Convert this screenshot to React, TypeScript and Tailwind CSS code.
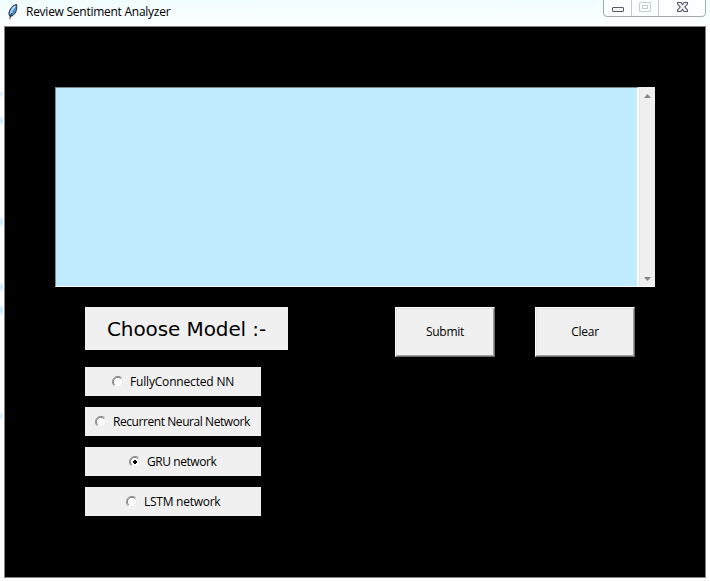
import React, { useState } from "react";

const MODELS = [
  { name: "FullyConnected NN", pad: "pl-[27px]", text: "tracking-[-0.18px]" },
  { name: "Recurrent Neural Network", pad: "pl-[10px]", text: "tracking-[-0.43px]" },
  { name: "GRU network", pad: "pl-[44px]", text: "tracking-[-0.44px]" },
  { name: "LSTM network", pad: "pl-[41px]", text: "tracking-[-0.26px]" },
];

function Feather() {
  return (
    <svg className="ml-[7px] mt-[4px] h-4 w-3 shrink-0" viewBox="0 0 12 16">
      <path d="M9.5 0.5C5.8 1.2 2.4 4.8 1.9 9.8L2.9 12.5L6 11.5C9 8.8 10.4 5.2 9.5 0.5Z" fill="#4f8fc4" stroke="#20273f" strokeWidth="1" />
      <path d="M8.2 2.2C5.8 4 4.2 6.8 3.6 9.8" fill="none" stroke="#a9d8f3" strokeWidth="1.7" />
      <path d="M4.6 9L2.7 15.3" fill="none" stroke="#20273f" strokeWidth="0.9" />
    </svg>
  );
}

function WindowControls() {
  return (
    <svg className="ml-auto mr-[4px] h-[17px] w-[103px]" viewBox="0 0 103 17" fill="none">
      <path d="M0.5 0V13Q0.5 16.5 4 16.5H99Q102.5 16.5 102.5 13V0" fill="#fbffff" stroke="#a2aaaa" />
      <path d="M28.5 0V16M55.5 0V16" stroke="#c3cbcb" />
      <rect x="9.5" y="7.5" width="11" height="4" rx="0.5" fill="#f4f4f4" stroke="#555a68" />
      <rect x="36.5" y="2.5" width="11" height="9" rx="0.5" stroke="#c5cdca" />
      <rect x="39.5" y="5.5" width="5" height="3" stroke="#c5cdca" />
      <path d="M74.5 2.5H78L79.5 4.5L81 2.5H84.5V4L81.8 7L84.5 10V11.5H81L79.5 9.5L78 11.5H74.5V10L77.2 7L74.5 4Z" fill="#f0f0f0" stroke="#555a68" strokeWidth="1.1" />
    </svg>
  );
}

function Radio({ checked }: { checked: boolean }) {
  return (
    <svg className="h-3 w-3 shrink-0" viewBox="0 0 12 12">
      <circle cx="6" cy="6" r="5.6" fill="white" />
      <path d="M2 9.7A5.3 5.3 0 0 1 9.8 2" fill="none" stroke="#8d8d8d" strokeWidth="1" />
      <path d="M2.7 8.8A4.3 4.3 0 0 1 8.9 2.7" fill="none" stroke="#555" strokeWidth="0.8" />
      <path d="M9.4 2.8A4.6 4.6 0 0 1 2.8 9.4" fill="none" stroke="#dcdcdc" strokeWidth="0.8" />
      {checked && <path d="M5 4H7V5H8V7H7V8H5V7H4V5H5Z" fill="black" />}
    </svg>
  );
}

function PushButton({ children, onClick }: { children: React.ReactNode; onClick?: () => void }) {
  return (
    <button onClick={onClick} className="h-[50px] w-[100px] border border-t-white border-l-white border-r-[#696969] border-b-[#696969] bg-[#f0f0f0]">
      <span className="flex h-full w-full items-center justify-center border border-t-[#e3e3e3] border-l-[#e3e3e3] border-r-[#a0a0a0] border-b-[#a0a0a0] tracking-[-0.26px]">
        {children}
      </span>
    </button>
  );
}

export default function App() {
  const [model, setModel] = useState("GRU network");
  const [review, setReview] = useState("");
  return (
    <div className="flex h-[581px] w-[710px] flex-col overflow-hidden bg-[linear-gradient(180deg,transparent_90px,#d5effc_94px,transparent_98px,transparent_116px,#c4e8fc_121px,transparent_126px,transparent_216px,#c4e8fc_222px,transparent_228px,transparent_282px,#c4e8fc_287px,transparent_292px,transparent_304px,#c4e8fc_310px,transparent_317px,transparent_410px,#d5effc_416px,transparent_422px)] bg-[length:3px_581px] bg-no-repeat font-['Open_Sans','Noto_Sans',sans-serif] text-[12px] leading-4 text-black">
      <header className="flex h-[26px] shrink-0 bg-gradient-to-b from-[#f0fdff] to-[#fdffff]">
        <Feather />
        <h1 className="ml-[7px] mt-[4px] whitespace-nowrap tracking-[-0.26px]">Review Sentiment Analyzer</h1>
        <WindowControls />
      </header>
      <main className="ml-[4px] h-[552px] w-[702px] shrink-0 border border-[#858585] bg-black pl-[50px] pt-[60px]">
        <div className="flex h-[200px] w-[600px] bg-[#f0f0f0]">
          <div className="w-[584px] border-t border-l border-t-[#788b94] border-l-[#788b94] border-r-2 border-b border-r-white border-b-white bg-[#c0edfe]">
            <textarea value={review} onChange={(e) => setReview(e.target.value)} className="block h-full w-full resize-none bg-transparent p-1 outline-none" />
          </div>
          <div className="flex w-4 flex-col items-center justify-between border-b border-l border-b-white border-l-[#e5e5e5] bg-[#efefef] pt-[7px] pb-[5px]">
            <svg className="h-1 w-[7px]" viewBox="0 0 7 4"><path d="M0 4L3.5 0L7 4Z" fill="#858585" /></svg>
            <svg className="h-1 w-[7px]" viewBox="0 0 7 4"><path d="M0 0L3.5 4L7 0Z" fill="#858585" /></svg>
          </div>
        </div>
        <div className="ml-[30px] mt-5 flex">
          <section>
            <h2 className="flex h-[43px] w-[203px] items-center bg-[#f0f0f0] pl-[22px] font-['DejaVu_Sans',sans-serif] text-[20px] leading-6 tracking-[-0.1px] whitespace-nowrap">Choose Model :-</h2>
            <div className="mt-[17px] flex flex-col gap-[11px]">
              {MODELS.map((item) => (
                <button key={item.name} onClick={() => setModel(item.name)} className={`flex h-[29px] w-[176px] items-center gap-[6px] bg-[#f0f0f0] ${item.pad}`}>
                  <Radio checked={model === item.name} />
                  <span className={`whitespace-nowrap text-left ${item.text}`}>{item.name}</span>
                </button>
              ))}
            </div>
          </section>
          <div className="ml-[107px] flex items-start gap-10">
            <PushButton>Submit</PushButton>
            <PushButton onClick={() => setReview("")}>Clear</PushButton>
          </div>
        </div>
      </main>
    </div>
  );
}
